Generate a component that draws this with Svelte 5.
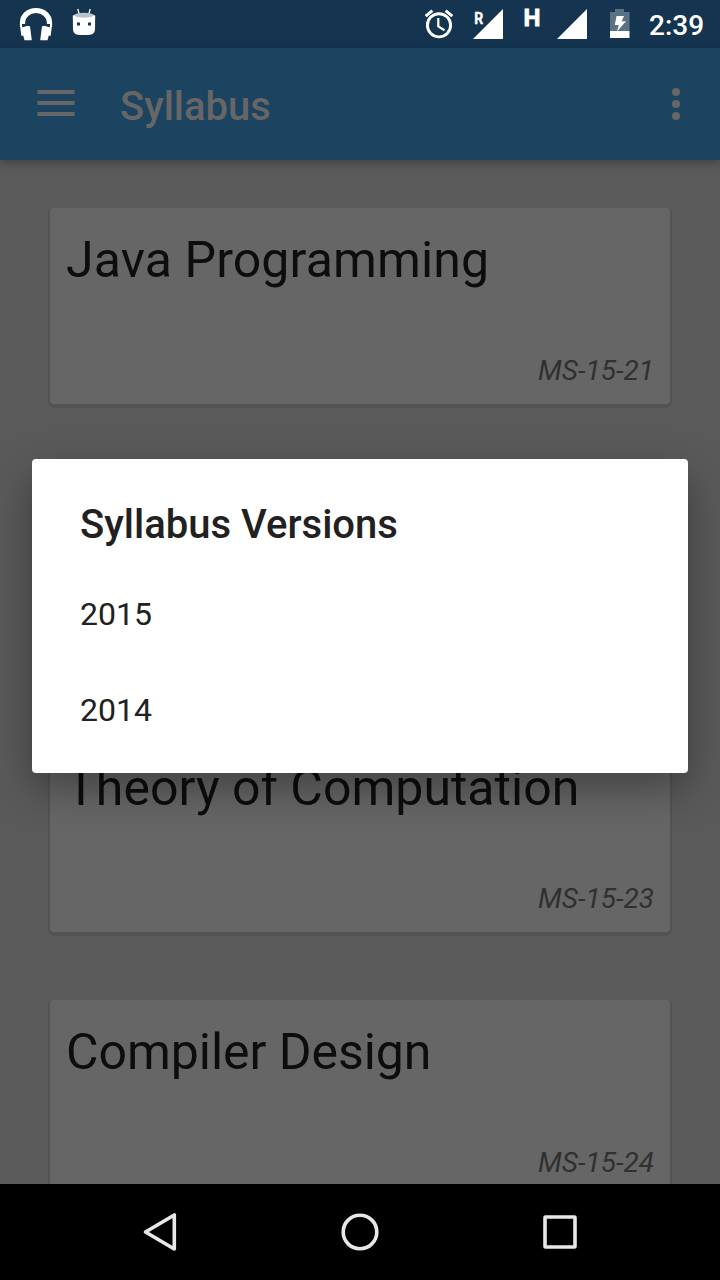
<script>
  const subjects = [
    { name: 'Java Programming', code: 'MS-15-21', tracking: '0.12px' },
    { name: 'Theory of Computation', code: 'MS-15-23', tracking: '0.02px' },
    { name: 'Compiler Design', code: 'MS-15-24', tracking: '-0.05px' }
  ];
  const versions = ['2015', '2014'];
</script>

<div class="screen">
  <header class="status">
    <svg width="44" height="48" viewBox="16 0 44 48">
      <path d="M22.500 27V22.500a13.500 12 0 0 1 27 0V27" fill="none" stroke="#fff" stroke-width="5.200" />
      <path d="M20 25l10 1.300 1.800 14H24.500l-1.200-4.500h-2zM52 25l-10 1.300-1.800 14h7.300l1.200-4.500h2z" fill="#fff" />
      <path d="M22 24l4.500 0v2.200l-4.500 1zM50 24l-4.500 0v2.200l4.500 1z" fill="#143450" />
    </svg>
    <svg width="44" height="48" viewBox="60 0 44 48">
      <path d="M79.300 14.500l-1.500-5.500M88.700 14.500l1.500-5.500" stroke="#fff" stroke-width="1.300" />
      <path d="M72.800 15.500q11-4 22.400 0l-.2 14q-.5 4.700-5 5.200-6 .8-12 0-4.500-.5-5-5.200z" fill="#fff" />
      <ellipse cx="84" cy="15.300" rx="9.700" ry="2.500" fill="#b8c3cb" />
      <path d="M77 22.500h3v3h-3zM88 22.500h3v3h-3z" fill="#143450" />
    </svg>
    <i class="spacer"></i>
    <svg width="44" height="48" viewBox="420 0 44 48">
      <g fill="none" stroke="#fff">
        <circle cx="439" cy="25.300" r="11.600" stroke-width="2.900" />
        <path d="M438.300 18v8.400l6.200 3.800" stroke-width="2.200" />
        <path d="M425.700 16.200l6.700-5.600M452.300 16.200l-6.700-5.600" stroke-width="3" />
      </g>
    </svg>
    <svg width="48" height="48" viewBox="464 0 48 48">
      <path d="M503 9v30h-30z" fill="#fff" />
      <text x="474.200" y="23.500" font-size="16.500" font-weight="700" textLength="9" lengthAdjust="spacingAndGlyphs" fill="#fff" stroke="#fff" stroke-width=".4">R</text>
    </svg>
    <svg width="38" height="48" viewBox="512 0 38 48">
      <text x="523.600" y="25.600" font-size="24" font-weight="700" fill="#fff" stroke="#fff" stroke-width=".8">H</text>
    </svg>
    <svg width="46" height="48" viewBox="550 0 46 48"><path d="M587 9v30h-30z" fill="#fff" /></svg>
    <svg width="53" height="48" viewBox="596 0 53 48">
      <path d="M610 12h5V9h9v3h5.500v19H610z" fill="#5b7184" />
      <path d="M610 31h19.500v7H610z" fill="#fff" />
      <path d="M616.500 16h7.500l-2.300 5.300h4.300L617 31.500l1.800-6.500h-4z" fill="#fff" />
    </svg>
    <time>2:39</time>
  </header>

  <nav class="toolbar">
    <svg width="38" height="28" viewBox="0 0 38 28"><path d="M.5 2h37M.5 13h37M.5 24h37" stroke="#666" stroke-width="4" /></svg>
    <h1>Syllabus</h1>
    <svg width="8" height="34" viewBox="0 0 8 34" fill="#666"><circle cx="4" cy="5" r="4" /><circle cx="4" cy="17" r="4" /><circle cx="4" cy="29" r="4" /></svg>
  </nav>

  <main>
    {#each subjects as subject, i}
      <article class:gap={i === 1}>
        <h2 style:letter-spacing={subject.tracking}>{subject.name}</h2>
        <em>{subject.code}</em>
      </article>
    {/each}
  </main>

  <footer>
    <svg width="40" height="40" viewBox="0 0 40 40"><path d="M34.300 3v34L5.500 20z" /></svg>
    <svg width="40" height="40" viewBox="0 0 40 40"><circle cx="20" cy="20" r="16.800" /></svg>
    <svg width="40" height="40" viewBox="0 0 40 40"><rect x="5" y="5" width="30" height="30" rx=".5" /></svg>
  </footer>

  <section class="dialog" role="dialog" aria-labelledby="versions">
    <h3 id="versions">Syllabus Versions</h3>
    {#each versions as version}
      <div class="version">{version}</div>
    {/each}
  </section>
</div>

<style>
  .screen {
    position: relative;
    display: flex;
    flex-direction: column;
    width: 720px;
    height: 1280px;
    overflow: hidden;
    background: #5a5a5a;
    font-family: Roboto, sans-serif;
  }
  svg { display: block; flex: none; }
  h1, h2, h3 { margin: 0; }
  .status {
    display: flex;
    flex: none;
    height: 48px;
    padding-left: 16px;
    background: #143450;
    color: #fff;
  }
  .spacer { flex: 1; }
  time { width: 71px; font-size: 28px; line-height: 52px; font-weight: 500; }
  .toolbar {
    display: flex;
    flex: none;
    align-items: center;
    height: 112px;
    box-sizing: border-box;
    padding: 0 40px 0 37px;
    background: #1c435f;
    box-shadow: 0 3px 8px rgba(0, 0, 0, .25);
    z-index: 1;
  }
  h1 { flex: 1; margin: 6px 0 0 45px; color: #666; font-size: 40px; line-height: 48px; font-weight: 500; letter-spacing: -.05px; }
  main {
    flex: 1;
    min-height: 0;
    display: flex;
    flex-direction: column;
    gap: 68px;
    padding: 48px 50px 0;
    overflow: hidden;
  }
  article {
    display: flex;
    flex: none;
    flex-direction: column;
    justify-content: space-between;
    height: 196px;
    box-sizing: border-box;
    padding: 23px 16px 17px;
    border-radius: 4px;
    background: #666;
    box-shadow: 0 2px 0 2px #535353;
    clip-path: inset(0 -2px -4px -2px);
  }
  .gap { margin-top: 264px; }
  h2 { color: #0d0d0d; font-size: 50px; line-height: 59px; font-weight: 400; white-space: nowrap; }
  em { align-self: flex-end; color: #303030; font-size: 28px; line-height: 33px; }
  footer {
    display: flex;
    flex: none;
    align-items: center;
    justify-content: center;
    gap: 160px;
    height: 96px;
    background: #000;
    position: relative;
    z-index: 3;
  }
  footer svg { fill: none; stroke: #e8e8e8; stroke-width: 3.6; stroke-linejoin: round; }
  .dialog {
    position: absolute;
    z-index: 2;
    left: 32px;
    top: 459px;
    width: 656px;
    height: 314px;
    box-sizing: border-box;
    padding: 42px 48px 0;
    border-radius: 4px;
    background: #fff;
    color: #212121;
    box-shadow: 0 16px 40px rgba(0, 0, 0, .34);
  }
  h3 { margin-bottom: 17px; font-size: 40px; line-height: 48px; font-weight: 500; }
  .version { font-size: 32px; line-height: 96px; }
</style>
